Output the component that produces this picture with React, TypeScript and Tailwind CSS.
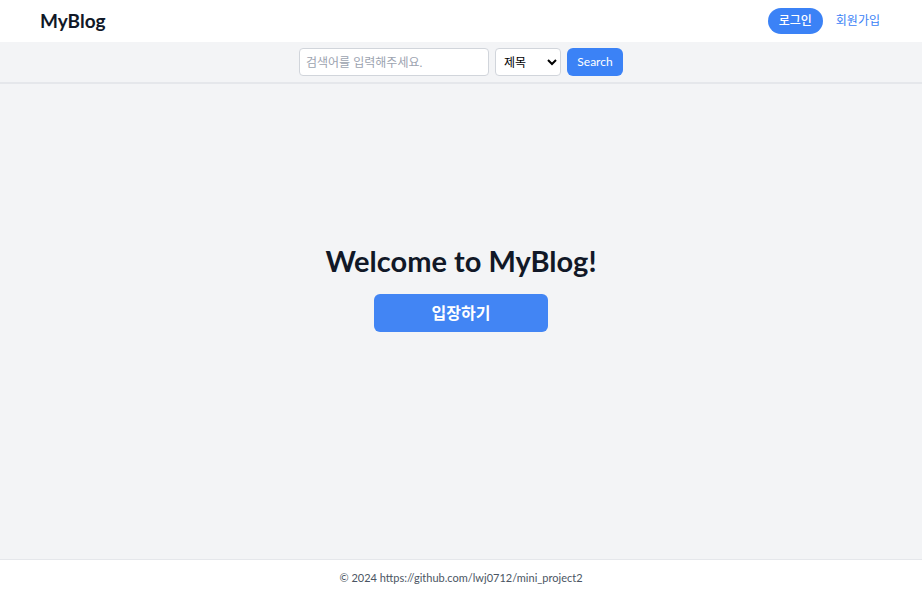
export default function App() {
  return (
    <div
      className="min-h-screen flex flex-col bg-[#f3f4f6]"
      style={{ fontFamily: 'Lato, "Noto Sans CJK KR", sans-serif' }}
    >
      <header className="bg-white h-[42px] px-10 flex items-center justify-between">
        <h1 className="text-[19px] font-bold text-[#111827]">MyBlog</h1>
        <nav className="flex items-center gap-[13px]">
          <button className="h-[26px] px-[11px] rounded-full bg-[#3b82f6] text-white text-xs font-medium">
            로그인
          </button>
          <a className="text-xs text-[#3b82f6] mr-[2px]">회원가입</a>
        </nav>
      </header>

      <div className="h-[42px] flex items-center justify-center gap-1.5 border-b-2 border-[#e5e7eb]">
        <input
          className="w-[190px] h-7 px-1.5 bg-white border border-[#d1d5db] rounded text-xs placeholder:text-[#9ca3af]"
          placeholder="검색어를 입력해주세요."
        />
        <select className="w-[66px] h-7 px-1 bg-white border border-[#d1d5db] rounded text-xs text-black">
          <option>제목</option>
          <option>내용</option>
        </select>
        <button className="w-14 h-7 rounded-md bg-[#3b82f6] text-white text-xs">
          Search
        </button>
      </div>

      <main className="flex-1 flex flex-col items-center justify-center pb-[68px]">
        <h2 className="text-[29px] leading-9 font-bold text-[#111827]">Welcome to MyBlog!</h2>
        <button className="mt-[15px] w-[174px] h-[38px] rounded-md bg-[#4285f4] text-white font-bold">
          입장하기
        </button>
      </main>

      <footer className="bg-white border-t border-[#e5e7eb] h-[38px] flex items-center justify-center">
        <p className="text-[11px] text-[#4b5563]">© 2024 https://github.com/lwj0712/mini_project2</p>
      </footer>
    </div>
  );
}
